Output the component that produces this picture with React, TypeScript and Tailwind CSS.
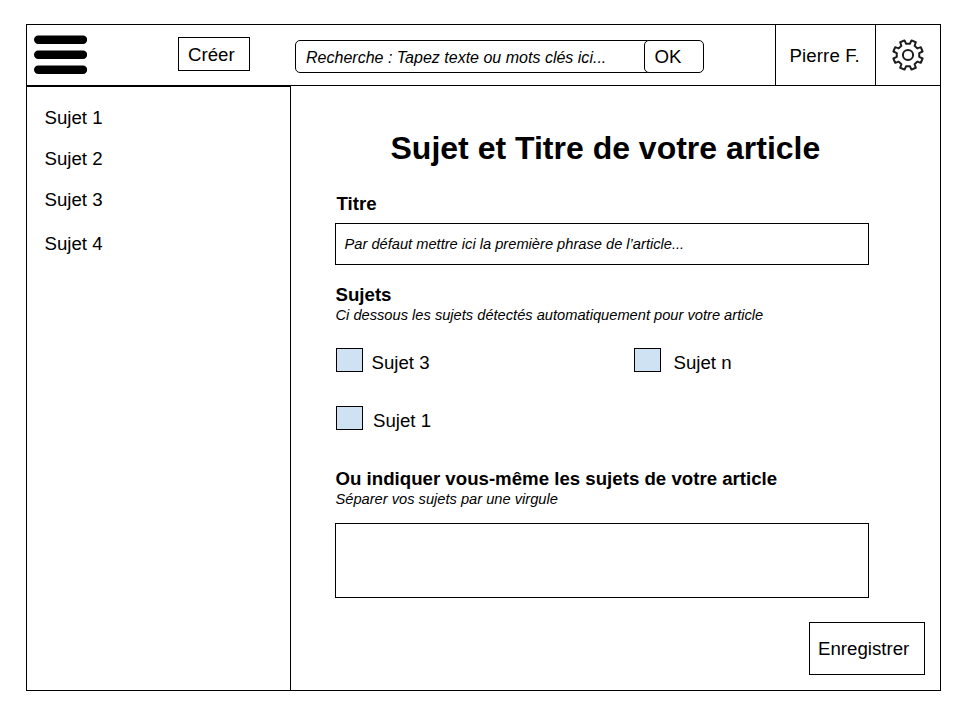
import React from "react";

const point = (radius: number, degrees: number) => {
  const a = ((degrees - 90) * Math.PI) / 180;
  return `${(16 + radius * Math.cos(a)).toFixed(2)} ${(16 + radius * Math.sin(a)).toFixed(2)}`;
};

// Eight-toothed cog outline, with a gap between teeth at the top.
const cogPoints = Array.from({ length: 8 }, (_, i) => {
  const c = 22.5 + i * 45;
  return [point(11.4, c - 13), point(15, c - 9), point(15, c + 9), point(11.4, c + 13)].join(" L");
}).join(" L");

function Cog() {
  return (
    <svg className="h-8 w-8" viewBox="0 0 32 32" fill="none" stroke="#1c1c1c" strokeWidth="2" strokeLinejoin="round">
      <path d={`M${cogPoints}Z`} />
      <circle cx="16" cy="16" r="5.1" />
    </svg>
  );
}

function MenuBars() {
  return (
    <svg className="mt-[10px] ml-[7px] h-[39px] w-[53px]" viewBox="0 0 53 39" stroke="#000" strokeWidth="8.4" strokeLinecap="round">
      <path d="M4.2 4.8H49M4.2 19.8H49M4.2 34.8H49" />
    </svg>
  );
}

function Choice({ label, className }: { label: string; className: string }) {
  return (
    <div className="flex h-[25px]">
      <span className="h-6 w-[27px] border border-black bg-[#cfe2f3]" />
      <span className={`mt-[5px] ${className}`}>{label}</span>
    </div>
  );
}

export default function App() {
  return (
    <div className="h-[720px] w-[960px] bg-white pt-6 pl-[26px] font-['Liberation_Sans',Arial,sans-serif] text-[18.67px] leading-5 whitespace-nowrap text-black">
      <div className="flex h-[667px] w-[915px] flex-col border border-black">
        <header className="flex h-[61px] shrink-0 border-b border-black">
          <MenuBars />
          <button className="mt-3 ml-[91px] flex h-[34px] w-[72px] border border-black pt-[7px] pl-[9px]">Créer</button>
          <div className="mt-[15px] ml-[45px] flex h-[33px] w-[409px]">
            <div className="-mr-5 w-[369px] rounded-l-[5px] border border-black pt-[6px] pl-[10px] text-[16.03px] leading-5 italic">
              Recherche : Tapez texte ou mots clés ici...
            </div>
            <button className="flex w-[60px] rounded-[5px] border border-black bg-white pt-[6px] pl-[9.5px]">OK</button>
          </div>
          <div className="ml-[71px] w-[100px] border-l border-black pt-[21px] pl-[13.5px] tracking-[0.1px]">Pierre F.</div>
          <div className="w-[65px] border-l border-black pt-[14px] pl-4">
            <Cog />
          </div>
        </header>
        <div className="flex flex-1">
          <aside className="flex w-[264px] flex-col border-t border-r border-black pt-[21px] pl-[17.5px]">
            <span>Sujet 1</span>
            <span className="mt-[21px]">Sujet 2</span>
            <span className="mt-[21px]">Sujet 3</span>
            <span className="mt-6">Sujet 4</span>
          </aside>
          <main className="flex flex-1 flex-col pl-11">
            <h1 className="mt-[44px] ml-[55.5px] text-[32px] leading-9 font-bold">Sujet et Titre de votre article</h1>
            <h2 className="mt-7 ml-[1.5px] font-bold">Titre</h2>
            <div className="mt-[9px] h-[42px] w-[534px] border border-black pt-[10px] pl-[8.5px] text-[14.67px] italic">
              Par défaut mettre ici la première phrase de l’article...
            </div>
            <h2 className="mt-5 ml-[0.5px] font-bold">Sujets</h2>
            <p className="ml-[0.5px] text-[14.67px] italic">Ci dessous les sujets détectés automatiquement pour votre article</p>
            <div className="mt-[23px] ml-px grid grid-cols-[298px_1fr] gap-y-[33px]">
              <Choice label="Sujet 3" className="ml-[8.5px]" />
              <Choice label="Sujet n" className="ml-[12.5px]" />
              <Choice label="Sujet 1" className="ml-[10px]" />
            </div>
            <h2 className="mt-[38px] ml-[0.5px] font-bold">Ou indiquer vous-même les sujets de votre article</h2>
            <p className="ml-[0.5px] text-[14.67px] italic">Séparer vos sujets par une virgule</p>
            <div className="mt-[14px] h-[75px] w-[534px] border border-black" />
            <button className="mt-6 ml-[474px] flex h-[53px] w-[116px] border border-black pt-4 pl-[8px]">Enregistrer</button>
          </main>
        </div>
      </div>
    </div>
  );
}
